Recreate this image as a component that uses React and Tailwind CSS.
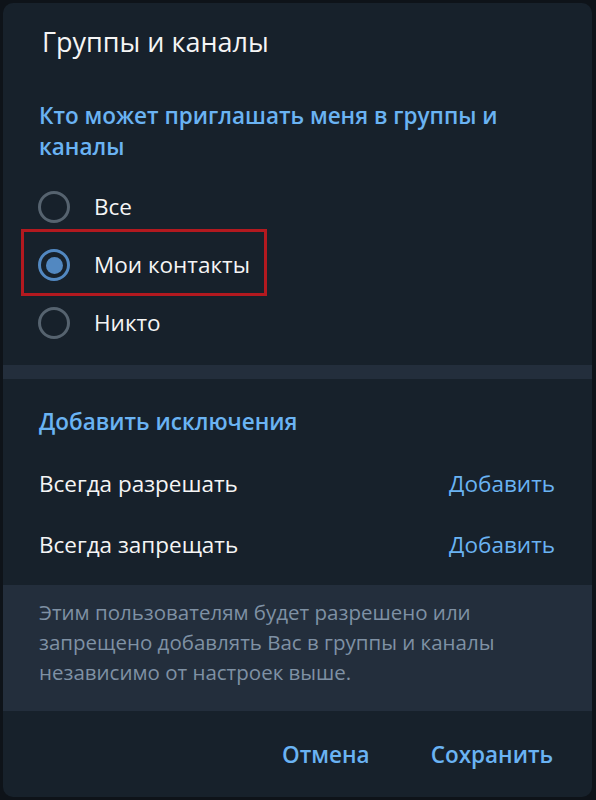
import React from "react";

function Radio({ checked }) {
  return checked ? (
    <div className="w-[32px] h-[32px] rounded-full border-[3px] border-[#5288c1] flex items-center justify-center">
      <div className="w-[17px] h-[17px] rounded-full bg-[#5288c1]" />
    </div>
  ) : (
    <div className="w-[32px] h-[32px] rounded-full border-[3px] border-[#56636f]" />
  );
}

export default function App() {
  const font = { fontFamily: '"Open Sans", "Noto Sans", sans-serif' };
  return (
    <div className="w-[596px] h-[800px] bg-[#0e1319] pt-[3px] pl-[3px] overflow-hidden" style={font}>
      <div className="w-[589px] h-[794px] rounded-[10px] bg-[#17212b] flex flex-col">
        <div className="pl-[39px] pt-[22px] text-[27px] leading-[34px] text-[#f5f5f5]">Группы и каналы</div>
        <div className="pl-[36px] pr-[60px] mt-[41px] text-[22.5px] leading-[31px] font-semibold text-[#6ab3f3]">
          Кто может приглашать меня в группы и каналы
        </div>
        <div className="mt-[16px] flex flex-col relative">
          {[
            ["Все", false],
            ["Мои контакты", true],
            ["Никто", false],
          ].map(([label, c]) => (
            <div key={label} className="h-[58px] flex items-center pl-[35px]">
              <Radio checked={c} />
              <span className="ml-[24px] text-[22.5px] text-[#f5f5f5]">{label}</span>
            </div>
          ))}
          <div className="absolute left-[18px] top-[51px] w-[246px] h-[67px] border-[3px] border-[#b3191f]" />
        </div>
        <div className="mt-[13px] h-[14px] bg-[#232e3c]" />
        <div className="pl-[36px] mt-[28px] text-[22.5px] leading-[30px] font-semibold text-[#6ab3f3]">
          Добавить исключения
        </div>
        <div className="mt-[16px] flex flex-col">
          {["Всегда разрешать", "Всегда запрещать"].map((t) => (
            <div key={t} className="h-[61px] flex items-center justify-between pl-[36px] pr-[37px]">
              <span className="text-[22.5px] text-[#f5f5f5]">{t}</span>
              <span className="text-[22.5px] text-[#6ab3f3]">Добавить</span>
            </div>
          ))}
        </div>
        <div className="mt-[10px] bg-[#232e3c] pl-[36px] pr-[40px] pt-[12px] pb-[24px] text-[20.5px] leading-[30px] text-[#7f91a4]">
          Этим пользователям будет разрешено или запрещено добавлять Вас в группы и каналы независимо от настроек выше.
        </div>
        <div className="flex justify-end items-center gap-[61px] pr-[39px] mt-[27px] text-[22.5px] font-semibold text-[#6ab3f3]">
          <span>Отмена</span>
          <span>Сохранить</span>
        </div>
      </div>
    </div>
  );
}
